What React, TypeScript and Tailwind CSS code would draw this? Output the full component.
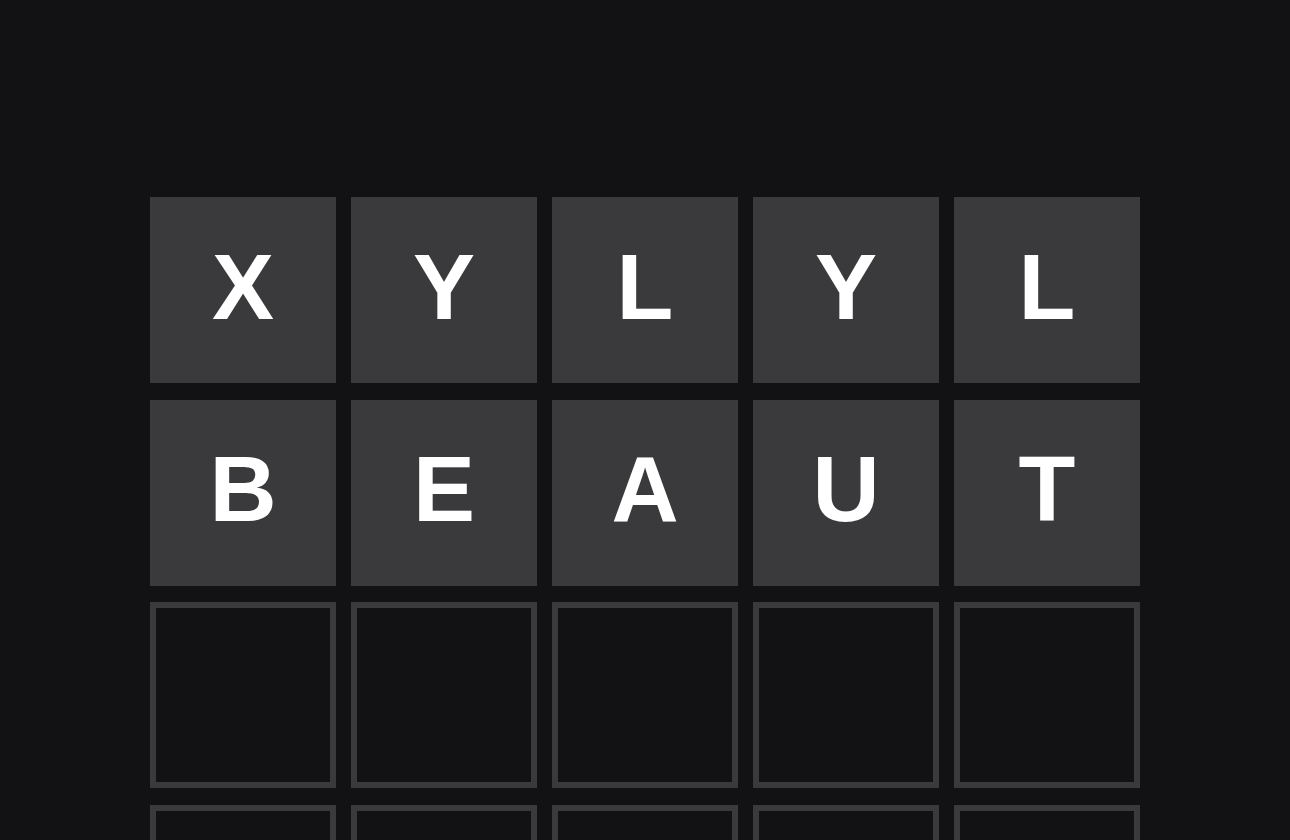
const rows: string[] = ["XYLYL", "BEAUT", "", "", "", ""];

function Tile({ letter }: { letter?: string }) {
  if (letter) {
    return (
      <div className="flex h-[186px] w-[186px] items-center justify-center bg-[#3a3a3c] pb-[6px] text-[93px] font-bold leading-none text-white">
        {letter}
      </div>
    );
  }
  return <div className="h-[186px] w-[186px] border-[6px] border-[#3a3a3c]" />;
}

export default function App() {
  return (
    <div
      className="min-h-screen overflow-hidden bg-[#121214]"
      style={{ fontFamily: '"Liberation Sans", Arial, sans-serif' }}
    >
      <div className="mx-auto flex w-[990px] flex-col gap-[16.7px] pt-[197px]">
        {rows.map((word, r) => (
          <div key={r} className="flex gap-[15px]">
            {[0, 1, 2, 3, 4].map((c) => (
              <Tile key={c} letter={word[c]} />
            ))}
          </div>
        ))}
      </div>
    </div>
  );
}
